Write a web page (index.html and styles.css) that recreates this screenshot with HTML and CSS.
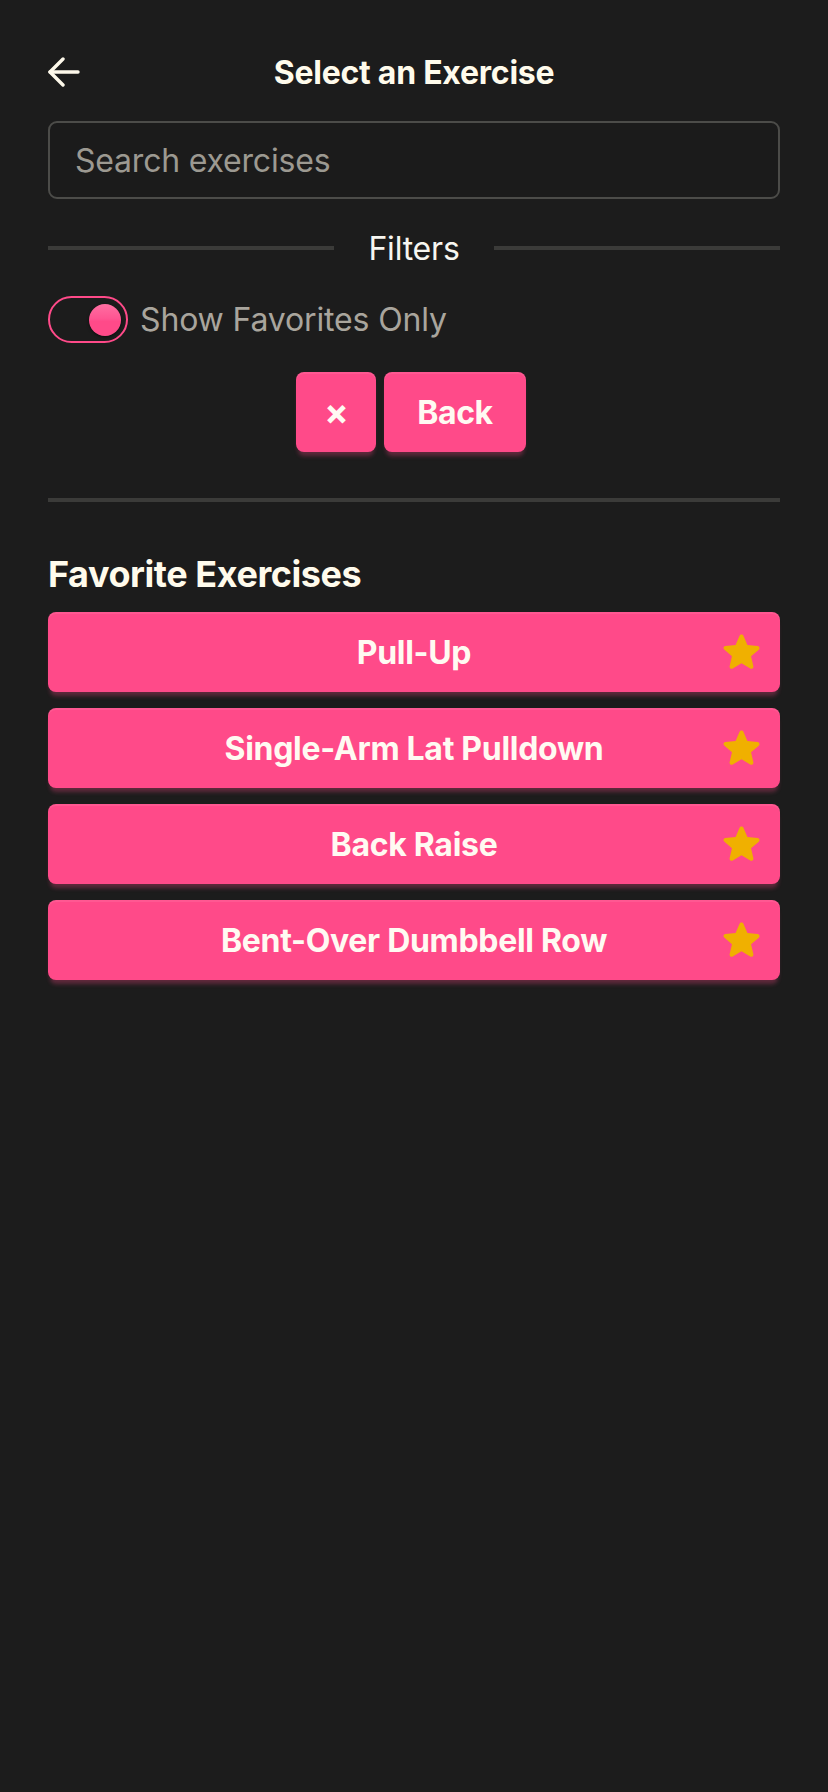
FILE: index.html
```html
<!DOCTYPE html>
<html lang="en">
<head>
<meta charset="utf-8">
<title>Select an Exercise</title>
<link rel="stylesheet" href="styles.css">
</head>
<body>
<div class="page">
  <header class="header">
    <button class="back-arrow" aria-label="Back">
      <svg width="32" height="30" viewBox="0 0 32 30" fill="none" stroke="#fdf8ea" stroke-width="3.4" stroke-linecap="round" stroke-linejoin="round">
        <path d="M30 15H2"/>
        <path d="M15 2L2 15l13 13"/>
      </svg>
    </button>
    <h1 class="title">Select an Exercise</h1>
    <span></span>
  </header>

  <input class="search" type="text" placeholder="Search exercises">

  <div class="divider-label">
    <span class="line"></span>
    <span class="label">Filters</span>
    <span class="line"></span>
  </div>

  <label class="toggle-row">
    <span class="toggle"><span class="knob"></span></span>
    <span class="toggle-text">Show Favorites Only</span>
  </label>

  <div class="actions">
    <button class="btn btn-x">×</button>
    <button class="btn">Back</button>
  </div>

  <hr class="rule">

  <h2 class="section-title">Favorite Exercises</h2>

  <ul class="list">
    <li class="card"><span class="card-name">Pull-Up</span><svg class="star" viewBox="3.4 2.9 17.2 17.1" width="37" height="36"><path fill="#f0b000" d="M12 17.27l4.15 2.51c.76.46 1.69-.22 1.490-1.08l-1.1-4.72 3.67-3.18c.67-.58.31-1.68-.57-1.75l-4.83-.41-1.89-4.46c-.34-.81-1.5-.81-1.84 0L9.19 8.63l-4.83.41c-.88.07-1.24 1.17-.57 1.75l3.67 3.18-1.1 4.72c-.2.86.73 1.54 1.49 1.08l4.15-2.5z"/></svg></li>
    <li class="card"><span class="card-name">Single-Arm Lat Pulldown</span><svg class="star" viewBox="3.4 2.9 17.2 17.1" width="37" height="36"><path fill="#f0b000" d="M12 17.27l4.15 2.51c.76.46 1.69-.22 1.49-1.08l-1.1-4.72 3.67-3.18c.67-.58.31-1.68-.57-1.75l-4.83-.41-1.89-4.46c-.34-.81-1.5-.81-1.84 0L9.19 8.63l-4.83.41c-.88.07-1.24 1.17-.57 1.75l3.67 3.18-1.1 4.72c-.2.86.73 1.54 1.49 1.08l4.15-2.5z"/></svg></li>
    <li class="card"><span class="card-name">Back Raise</span><svg class="star" viewBox="3.4 2.9 17.2 17.1" width="37" height="36"><path fill="#f0b000" d="M12 17.27l4.15 2.51c.76.46 1.69-.22 1.49-1.08l-1.1-4.72 3.67-3.18c.67-.58.31-1.68-.57-1.75l-4.83-.41-1.89-4.46c-.34-.81-1.5-.81-1.84 0L9.19 8.63l-4.83.41c-.88.07-1.24 1.17-.57 1.75l3.67 3.18-1.1 4.72c-.2.86.73 1.54 1.49 1.08l4.15-2.5z"/></svg></li>
    <li class="card"><span class="card-name">Bent-Over Dumbbell Row</span><svg class="star" viewBox="3.4 2.9 17.2 17.1" width="37" height="36"><path fill="#f0b000" d="M12 17.27l4.15 2.51c.76.46 1.69-.22 1.49-1.08l-1.1-4.72 3.67-3.18c.67-.58.31-1.68-.57-1.75l-4.83-.41-1.89-4.46c-.34-.81-1.5-.81-1.84 0L9.19 8.63l-4.83.41c-.88.07-1.24 1.17-.57 1.75l3.67 3.18-1.1 4.72c-.2.86.73 1.54 1.49 1.08l4.15-2.5z"/></svg></li>
  </ul>
</div>
</body>
</html>
```

FILE: styles.css
```css
* { box-sizing: border-box; }

html, body {
  margin: 0;
  padding: 0;
  background: #1c1c1c;
  min-height: 1792px;
}

body {
  font-family: Inter, "Noto Sans", "Liberation Sans", sans-serif;
  color: #fffbec;
}

.page {
  padding: 40px 48px 0;
  display: flex;
  flex-direction: column;
}

.header {
  display: grid;
  grid-template-columns: 1fr auto 1fr;
  align-items: center;
  height: 64px;
}

.back-arrow {
  background: none;
  border: 0;
  padding: 0;
  width: 32px;
  height: 30px;
  display: flex;
  align-items: center;
  cursor: pointer;
}

.title {
  margin: 0;
  font-size: 32px;
  font-weight: 700;
  color: #fffbec;
  letter-spacing: -0.25px;
}

.search {
  margin-top: 17px;
  height: 78px;
  width: 100%;
  border: 2px solid #4c4c49;
  border-radius: 9px;
  background: #1b1b1b;
  padding: 0 25px;
  font-family: inherit;
  font-size: 32px;
  letter-spacing: -0.2px;
  color: #fffbec;
  outline: none;
}

.search::placeholder {
  color: #9c9991;
}

.divider-label {
  margin-top: 25px;
  height: 48px;
  display: flex;
  align-items: center;
  gap: 34px;
}

.divider-label .line {
  flex: 1;
  height: 4px;
  background: #3b3b39;
}

.divider-label .label {
  font-size: 32px;
  letter-spacing: -0.2px;
  color: #f7f6f0;
}

.toggle-row {
  margin-top: 24px;
  display: flex;
  align-items: center;
  gap: 12px;
}

.toggle {
  width: 80px;
  height: 47px;
  border: 2.5px solid #ff4a89;
  border-radius: 24px;
  background: #1c1c1c;
  display: flex;
  align-items: center;
  justify-content: flex-end;
  padding-right: 5px;
}

.knob {
  width: 32px;
  height: 32px;
  border-radius: 50%;
  background: linear-gradient(180deg, #ff6fa2 0%, #ff5592 45%, #ff4a89 55%, #ff4a89 100%);
  box-shadow: 0 1px 3px rgba(0, 0, 0, 0.6);
}

.toggle-text {
  font-size: 32px;
  letter-spacing: -0.15px;
  color: #a9a59d;
}

.actions {
  margin-top: 29px;
  display: flex;
  justify-content: center;
  gap: 8px;
  padding-right: 6px;
}

.btn {
  height: 80px;
  padding: 0 33px;
  border: 0;
  border-radius: 8px;
  background: #ff4a89;
  color: #fffaf2;
  font-family: inherit;
  font-size: 32px;
  font-weight: 700;
  letter-spacing: -0.4px;
  box-shadow: inset 0 2px 0 rgba(255, 255, 255, 0.08), 0 6px 4px -2px rgba(255, 74, 137, 0.3);
}

.btn-x {
  width: 80px;
  padding: 0;
  font-size: 36px;
}

.rule {
  margin: 46px 0 0;
  border: 0;
  height: 4px;
  background: #3b3b39;
}

.section-title {
  margin: 50px 0 0;
  height: 44px;
  line-height: 44px;
  font-size: 36px;
  font-weight: 700;
  letter-spacing: -0.45px;
  color: #fffbec;
}

.list {
  list-style: none;
  margin: 16px 0 0;
  padding: 0;
  display: flex;
  flex-direction: column;
  gap: 16px;
}

.card {
  position: relative;
  height: 80px;
  border-radius: 8px;
  background: #ff4a89;
  display: flex;
  align-items: center;
  justify-content: center;
  box-shadow: inset 0 2px 0 rgba(255, 255, 255, 0.08), 0 6px 4px -2px rgba(255, 74, 137, 0.3);
}

.card-name {
  font-size: 32px;
  font-weight: 700;
  letter-spacing: -0.3px;
  color: #fffaf2;
}

.star {
  position: absolute;
  right: 20px;
  top: 21px;
}
```
